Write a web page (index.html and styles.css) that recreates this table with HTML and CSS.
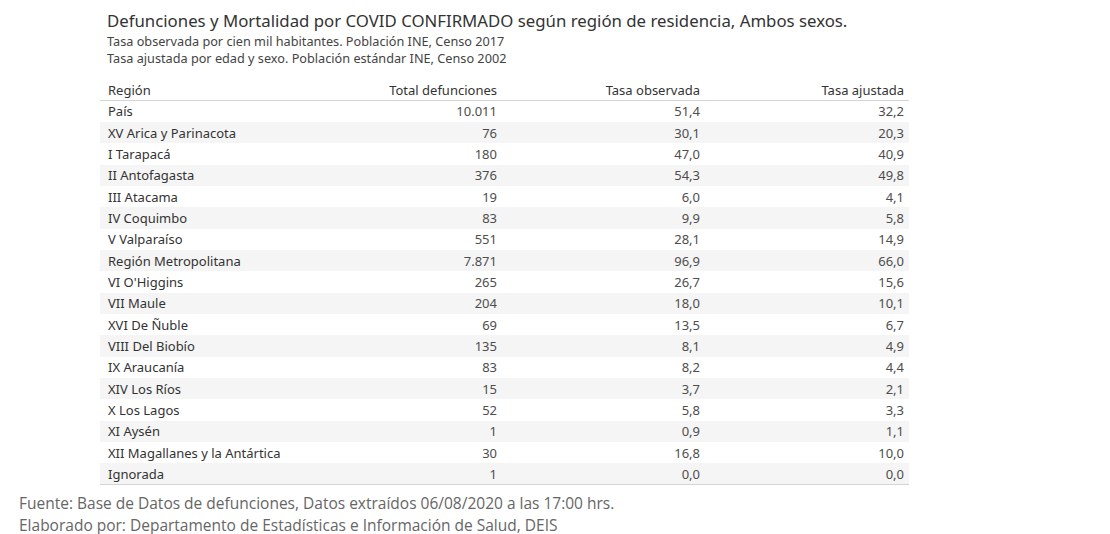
FILE: index.html
```html
<!DOCTYPE html>
<html lang="es">
<head>
<meta charset="utf-8">
<title>Defunciones COVID</title>
<link rel="stylesheet" href="styles.css">
</head>
<body>
<div class="viz">
  <div class="titles">
    <h1 class="title">Defunciones y Mortalidad por COVID CONFIRMADO según región de residencia, Ambos sexos.</h1>
    <p class="sub">Tasa observada por cien mil habitantes. Población INE, Censo 2017</p>
    <p class="sub">Tasa ajustada por edad y sexo. Población estándar INE, Censo 2002</p>
  </div>
  <table class="data">
    <colgroup>
      <col class="c-reg"><col class="c-tot"><col class="c-obs"><col class="c-adj">
    </colgroup>
    <thead>
      <tr><th class="h-reg">Región</th><th>Total defunciones</th><th>Tasa observada</th><th>Tasa ajustada</th></tr>
    </thead>
    <tbody>
      <tr><td>País</td><td>10.011</td><td>51,4</td><td>32,2</td></tr>
      <tr><td>XV Arica y Parinacota</td><td>76</td><td>30,1</td><td>20,3</td></tr>
      <tr><td>I Tarapacá</td><td>180</td><td>47,0</td><td>40,9</td></tr>
      <tr><td>II Antofagasta</td><td>376</td><td>54,3</td><td>49,8</td></tr>
      <tr><td>III Atacama</td><td>19</td><td>6,0</td><td>4,1</td></tr>
      <tr><td>IV Coquimbo</td><td>83</td><td>9,9</td><td>5,8</td></tr>
      <tr><td>V Valparaíso</td><td>551</td><td>28,1</td><td>14,9</td></tr>
      <tr><td>Región Metropolitana</td><td>7.871</td><td>96,9</td><td>66,0</td></tr>
      <tr><td>VI O'Higgins</td><td>265</td><td>26,7</td><td>15,6</td></tr>
      <tr><td>VII Maule</td><td>204</td><td>18,0</td><td>10,1</td></tr>
      <tr><td>XVI De Ñuble</td><td>69</td><td>13,5</td><td>6,7</td></tr>
      <tr><td>VIII Del Biobío</td><td>135</td><td>8,1</td><td>4,9</td></tr>
      <tr><td>IX Araucanía</td><td>83</td><td>8,2</td><td>4,4</td></tr>
      <tr><td>XIV Los Ríos</td><td>15</td><td>3,7</td><td>2,1</td></tr>
      <tr><td>X Los Lagos</td><td>52</td><td>5,8</td><td>3,3</td></tr>
      <tr><td>XI Aysén</td><td>1</td><td>0,9</td><td>1,1</td></tr>
      <tr><td>XII Magallanes y la Antártica</td><td>30</td><td>16,8</td><td>10,0</td></tr>
      <tr><td>Ignorada</td><td>1</td><td>0,0</td><td>0,0</td></tr>
    </tbody>
  </table>
</div>
<div class="footer">
  <p>Fuente: Base de Datos de defunciones, Datos extraídos 06/08/2020 a las 17:00 hrs.</p>
  <p>Elaborado por: Departamento de Estadísticas e Información de Salud, DEIS</p>
</div>
</body>
</html>
```

FILE: styles.css
```css
html, body {
  margin: 0;
  padding: 0;
  background: #ffffff;
}
body {
  width: 1110px;
  height: 534px;
  overflow: hidden;
  font-family: "Noto Sans", "Open Sans", sans-serif;
}
.viz {
  padding: 9px 0 0 100px;
  width: 809px;
}
.titles {
  padding-left: 7px;
}
.title {
  margin: 0;
  font-size: 16.8px;
  font-weight: normal;
  line-height: 24px;
  color: #333333;
  white-space: nowrap;
}
.sub {
  margin: 0;
  font-size: 12.7px;
  line-height: 17px;
  color: #444444;
  white-space: nowrap;
}
.data {
  margin-top: 13px;
  width: 809px;
  table-layout: fixed;
  border-collapse: collapse;
  font-size: 13px;
  color: #333333;
}
.c-reg { width: 230px; }
.c-tot { width: 172px; }
.c-obs { width: 203px; }
.c-adj { width: 204px; }
.data th {
  font-weight: normal;
  height: 19px;
  padding: 0 5px 1px 8px;
  border-bottom: 1px solid #d4d4d4;
  vertical-align: bottom;
  text-align: right;
  white-space: nowrap;
}
.data th.h-reg {
  text-align: left;
}
.data td {
  height: 21.35px;
  padding: 0 5px 0 8px;
  text-align: right;
  color: #4d4d4d;
  box-sizing: border-box;
  white-space: nowrap;
}
.data td:first-child {
  text-align: left;
  color: #333333;
}
.data tbody tr:nth-child(even) td {
  background: #f5f5f5;
}
.data tbody tr:last-child td {
  border-bottom: 1px solid #d4d4d4;
}
.footer {
  padding: 7px 0 0 19px;
  font-family: "Open Sans", "Noto Sans", sans-serif;
  font-size: 15.5px;
  color: #666666;
}
.footer p {
  margin: 0;
  line-height: 22px;
  white-space: nowrap;
}
```
